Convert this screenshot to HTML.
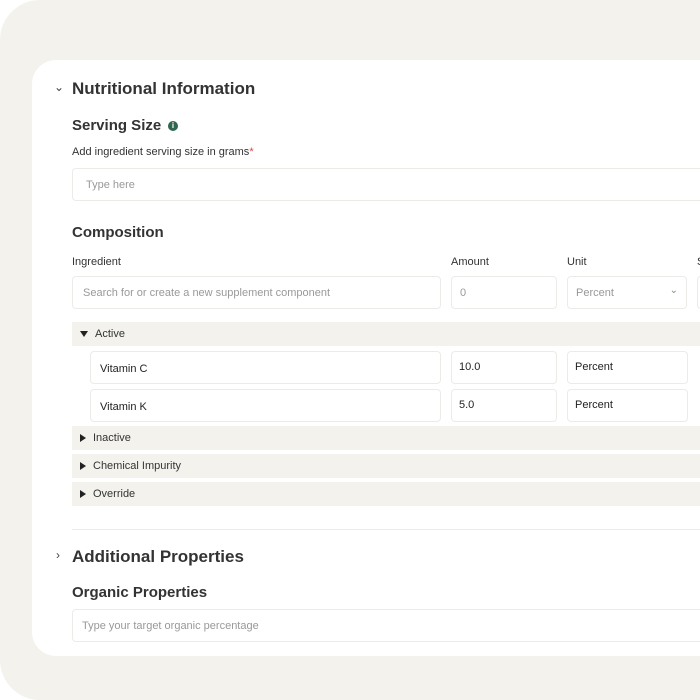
<!DOCTYPE html>
<html><head><style>
*{box-sizing:border-box;margin:0;padding:0}
body{width:700px;height:700px;background:#fff;font-family:"Liberation Sans",sans-serif;overflow:hidden;position:relative}
.outer{position:absolute;left:0;top:0;width:740px;height:700px;background:#f3f2ed;border-radius:40px 0 0 40px}
.card{position:absolute;left:32px;top:60px;width:700px;height:596px;background:#fff;border-radius:24px 0 0 24px}
.a{position:absolute;white-space:nowrap}
.h1{font-size:17px;font-weight:bold;color:#333}
.h2{font-size:15px;font-weight:bold;color:#333}
.lbl{font-size:11px;color:#333}
.inp{position:absolute;border:1px solid #ecebe8;border-radius:4px;background:#fff;font-size:11px;color:#999;padding-left:10px;display:flex;align-items:center}
.val{color:#222;font-size:11px}
.grp{position:absolute;left:72px;width:640px;height:24px;background:#f3f2ed;font-size:11px;color:#333;display:flex;align-items:center;padding-left:8px}
.tri{display:inline-block;width:0;height:0;border-top:4px solid transparent;border-bottom:4px solid transparent;border-left:6px solid #222;margin-right:7px}
.trid{display:inline-block;width:0;height:0;border-left:4px solid transparent;border-right:4px solid transparent;border-top:6px solid #222;margin-right:7px}
</style></head><body>
<div class="outer"></div>
<div class="card"></div>
<div class="a" style="left:54px;top:80px;font-size:12px;color:#444">&#8964;</div>
<div class="a h1" style="left:72px;top:79px">Nutritional Information</div>
<div class="a h2" style="left:72px;top:117px">Serving Size</div>
<div class="a" style="left:168px;top:121px;width:10px;height:10px;border-radius:50%;background:#2f6650;color:#fff;font-size:8px;font-weight:bold;text-align:center;line-height:10px">i</div>
<div class="a lbl" style="left:72px;top:146px">Add ingredient serving size in grams<span style="color:#d44">*</span></div>
<div class="inp" style="left:72px;top:168px;width:660px;height:33px;padding-left:13px">Type here</div>
<div class="a h2" style="left:72px;top:224px">Composition</div>
<div class="a lbl" style="left:72px;top:256px">Ingredient</div>
<div class="a lbl" style="left:451px;top:256px">Amount</div>
<div class="a lbl" style="left:567px;top:256px">Unit</div>
<div class="a lbl" style="left:697px;top:256px">S</div>
<div class="inp" style="left:72px;top:276px;width:369px;height:33px">Search for or create a new supplement component</div>
<div class="inp" style="left:451px;top:276px;width:106px;height:33px;padding-left:8px">0</div>
<div class="inp" style="left:567px;top:276px;width:120px;height:33px;padding-left:8px">Percent<span style="position:absolute;right:8px;top:8px;font-size:10px;color:#888">&#8964;</span></div>
<div class="inp" style="left:697px;top:276px;width:20px;height:33px"></div>
<div class="grp" style="top:322px"><span class="trid"></span>Active</div>
<div class="inp" style="left:90px;top:351px;width:351px;height:33px;padding-left:9px;padding-top:3px"><span class="val">Vitamin C</span></div>
<div class="inp" style="left:451px;top:351px;width:106px;height:33px;padding-left:7px;align-items:flex-start;padding-top:9px"><span class="val">10.0</span></div>
<div class="inp" style="left:567px;top:351px;width:121px;height:33px;padding-left:7px;align-items:flex-start;padding-top:9px"><span class="val">Percent</span></div>
<div class="inp" style="left:90px;top:389px;width:351px;height:33px;padding-left:9px;padding-top:3px"><span class="val">Vitamin K</span></div>
<div class="inp" style="left:451px;top:389px;width:106px;height:33px;padding-left:7px;align-items:flex-start;padding-top:9px"><span class="val">5.0</span></div>
<div class="inp" style="left:567px;top:389px;width:121px;height:33px;padding-left:7px;align-items:flex-start;padding-top:9px"><span class="val">Percent</span></div>
<div class="grp" style="top:426px"><span class="tri"></span>Inactive</div>
<div class="grp" style="top:454px"><span class="tri"></span>Chemical Impurity</div>
<div class="grp" style="top:482px"><span class="tri"></span>Override</div>
<div class="a" style="left:72px;top:529px;width:640px;height:1px;background:#ecebe7"></div>
<div class="a" style="left:56px;top:548px;font-size:12px;color:#444">&#8250;</div>
<div class="a h1" style="left:72px;top:547px">Additional Properties</div>
<div class="a h2" style="left:72px;top:584px">Organic Properties</div>
<div class="inp" style="left:72px;top:609px;width:660px;height:33px;padding-left:9px">Type your target organic percentage</div>
</body></html>
